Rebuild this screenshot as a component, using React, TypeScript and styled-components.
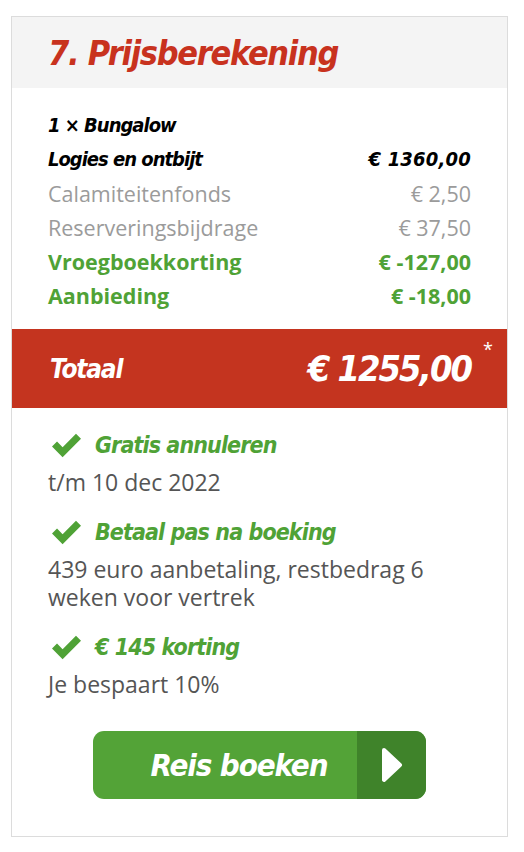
import React from "react";
import styled, { createGlobalStyle } from "styled-components";

const Global = createGlobalStyle`
  html, body { margin: 0; padding: 0; background: #fff; }
  body { font-family: "Open Sans", "Liberation Sans", sans-serif; }
  * { box-sizing: border-box; }
`;

const display = `"DejaVu Sans Condensed", "DejaVu Sans", sans-serif`;

const Card = styled.section`
  margin: 16px 0 0 11px;
  width: 497px;
  border: 1px solid #dcdcdc;
  background: #fff;
`;

const Header = styled.header`
  height: 71px;
  background: #f4f4f4;
  display: flex;
  align-items: center;
  padding-left: 36px;
`;

const Title = styled.h1`
  margin: 0;
  font-family: ${display};
  font-style: italic;
  font-weight: 700;
  font-size: 34px;
  color: #c8321e;
  letter-spacing: -1.3px;
`;

const Lines = styled.div`
  padding: 20px 36px 17px 36px;
`;

type Tone = "strong" | "muted" | "green";

const Line = styled.div<{ $tone: Tone }>`
  display: flex;
  justify-content: space-between;
  align-items: center;
  height: 34px;
  font-size: 21.5px;
  ${({ $tone }) =>
    $tone === "strong"
      ? `font-family: ${display}; font-style: italic; font-weight: 700; color: #000; font-size: 20px; letter-spacing: -1px;`
      : $tone === "muted"
      ? `color: #9b9b9b; font-weight: 400;`
      : `color: #4fa236; font-weight: 700;`}
`;

const Amount = styled.span<{ $tone: Tone }>`
  letter-spacing: ${({ $tone }) => ($tone === "strong" ? "0.2px" : "0")};
`;

const TotalBar = styled.div`
  position: relative;
  height: 79px;
  background: #c4341f;
  display: flex;
  align-items: center;
  justify-content: space-between;
  padding: 0 36px 0 38px;
  color: #fff;
  font-family: ${display};
  font-style: italic;
  font-weight: 700;
`;

const TotalLabel = styled.span`
  font-size: 26px;
  letter-spacing: -1.2px;
`;

const TotalPrice = styled.span`
  font-size: 36px;
  letter-spacing: -2px;
`;

const Star = styled.span`
  position: absolute;
  right: 14px;
  top: 8px;
  font-family: "Open Sans", sans-serif;
  font-style: normal;
  font-weight: 400;
  font-size: 18px;
`;

const Features = styled.div`
  padding: 20px 36px 37px 36px;
  display: flex;
  flex-direction: column;
  gap: 19px;
`;

const Feature = styled.div`
  display: flex;
  flex-direction: column;
  gap: 6px;
`;

const FeatureTitle = styled.div`
  display: flex;
  align-items: center;
  gap: 14px;
  height: 34px;
  padding-left: 4px;
  font-family: ${display};
  font-style: italic;
  font-weight: 700;
  font-size: 23px;
  letter-spacing: -0.9px;
  color: #4fa236;
`;

const FeatureText = styled.div`
  font-size: 23px;
  line-height: 28px;
  color: #555;
`;

const ButtonRow = styled.div`
  display: flex;
  justify-content: center;
  margin-top: 14px;
`;

const BookButton = styled.button`
  display: flex;
  width: 333px;
  height: 68px;
  padding: 0;
  border: 0;
  border-radius: 11px;
  overflow: hidden;
  background: #53a337;
  cursor: pointer;
`;

const ButtonLabel = styled.span`
  flex: 1;
  display: flex;
  align-items: center;
  justify-content: center;
  padding-left: 28px;
  color: #fff;
  font-family: ${display};
  font-style: italic;
  font-weight: 700;
  font-size: 31px;
  letter-spacing: -1.1px;
`;

const ButtonArrow = styled.span`
  width: 69px;
  display: flex;
  align-items: center;
  justify-content: center;
  background: #3f832a;
`;

const Check = () => (
  <svg width="29" height="25" viewBox="0 0 26 22" aria-hidden>
    <polygon points="0,12 4.5,7.5 9.5,12.5 21.5,0.5 26,5 9.5,21.5" fill="#4fa236" />
  </svg>
);

const Play = () => (
  <svg width="22" height="36" viewBox="0 0 22 36" aria-hidden>
    <path
      d="M3 3 L19 18 L3 33 Z"
      fill="#fff"
      stroke="#fff"
      strokeWidth="4"
      strokeLinejoin="round"
    />
  </svg>
);

const rows: { label: string; value?: string; tone: Tone }[] = [
  { label: "1 × Bungalow", tone: "strong" },
  { label: "Logies en ontbijt", value: "€ 1360,00", tone: "strong" },
  { label: "Calamiteitenfonds", value: "€ 2,50", tone: "muted" },
  { label: "Reserveringsbijdrage", value: "€ 37,50", tone: "muted" },
  { label: "Vroegboekkorting", value: "€ -127,00", tone: "green" },
  { label: "Aanbieding", value: "€ -18,00", tone: "green" },
];

const features = [
  { title: "Gratis annuleren", text: "t/m 10 dec 2022" },
  { title: "Betaal pas na boeking", text: "439 euro aanbetaling, restbedrag 6 weken voor vertrek" },
  { title: "€ 145 korting", text: "Je bespaart 10%" },
];

export default function App() {
  return (
    <>
      <Global />
      <Card>
        <Header>
          <Title>7. Prijsberekening</Title>
        </Header>
        <Lines>
          {rows.map((r) => (
            <Line key={r.label} $tone={r.tone}>
              <span>{r.label}</span>
              {r.value && <Amount $tone={r.tone}>{r.value}</Amount>}
            </Line>
          ))}
        </Lines>
        <TotalBar>
          <TotalLabel>Totaal</TotalLabel>
          <TotalPrice>€ 1255,00</TotalPrice>
          <Star>*</Star>
        </TotalBar>
        <Features>
          {features.map((f) => (
            <Feature key={f.title}>
              <FeatureTitle>
                <Check />
                <span>{f.title}</span>
              </FeatureTitle>
              <FeatureText>{f.text}</FeatureText>
            </Feature>
          ))}
          <ButtonRow>
            <BookButton type="button">
              <ButtonLabel>Reis boeken</ButtonLabel>
              <ButtonArrow>
                <Play />
              </ButtonArrow>
            </BookButton>
          </ButtonRow>
        </Features>
      </Card>
    </>
  );
}
